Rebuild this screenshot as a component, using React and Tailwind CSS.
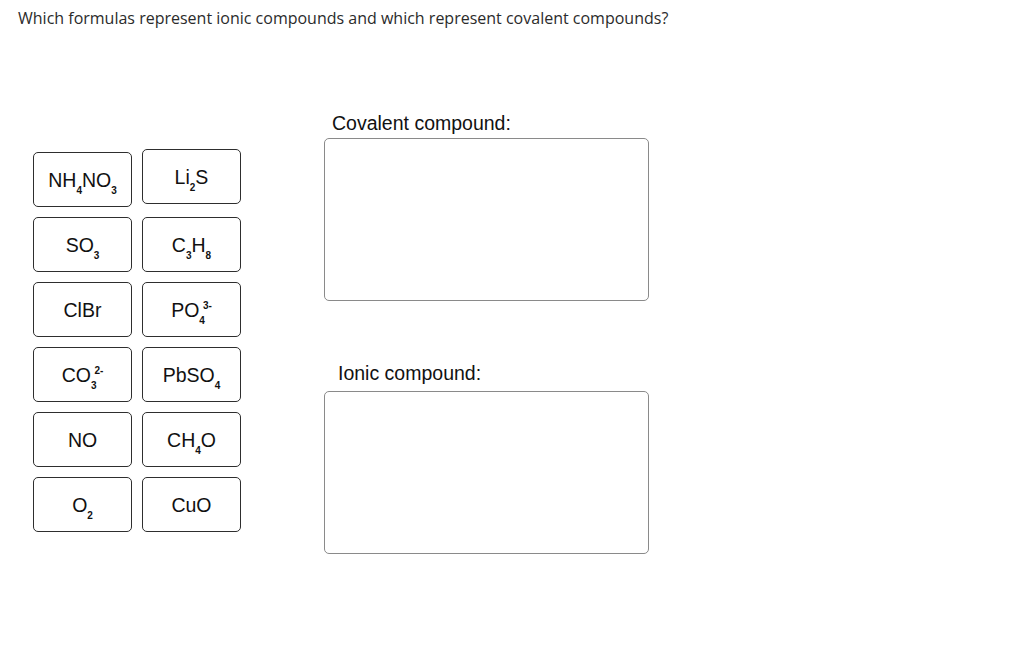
import React from 'react';

const Sub = ({ children }) => (
  <span className="relative top-[7px] text-[10px] font-bold leading-none">{children}</span>
);

const Sup = ({ children }) => (
  <span className="relative -top-[8px] -ml-[2px] text-[10px] font-bold leading-none">{children}</span>
);

const tiles = [
  { key: 'nh4no3', body: <>NH<Sub>4</Sub>NO<Sub>3</Sub></> },
  { key: 'li2s', body: <>Li<Sub>2</Sub>S</>, lifted: true },
  { key: 'so3', body: <>SO<Sub>3</Sub></> },
  { key: 'c3h8', body: <>C<Sub>3</Sub>H<Sub>8</Sub></> },
  { key: 'clbr', body: <>ClBr</> },
  { key: 'po4', body: <>PO<Sub>4</Sub><Sup>3-</Sup></> },
  { key: 'co3', body: <>CO<Sub>3</Sub><Sup>2-</Sup></> },
  { key: 'pbso4', body: <>PbSO<Sub>4</Sub></> },
  { key: 'no', body: <>NO</> },
  { key: 'ch4o', body: <>CH<Sub>4</Sub>O</> },
  { key: 'o2', body: <>O<Sub>2</Sub></> },
  { key: 'cuo', body: <>CuO</> },
];

const Tile = ({ body, lifted }) => (
  <div
    className={
      'h-[55px] flex items-center justify-center rounded-[5px] border border-[#2e2e2e] bg-white text-[19.5px] leading-none ' +
      (lifted ? '-mt-[3px] mb-[3px]' : '')
    }
  >
    <span className="pt-[2px]">{body}</span>
  </div>
);

export default function App() {
  return (
    <div className="w-[1024px] h-[648px] bg-white text-[#111] font-['Liberation_Sans',Arial,sans-serif]">
      {/* Question */}
      <h1 className="pl-[18px] pt-[8px] text-[16px] leading-[21px] text-[#2b2b2b] font-['Open_Sans',sans-serif]">
        Which formulas represent ionic compounds and which represent covalent compounds?
      </h1>

      <div className="flex items-start pt-[82px]">
        {/* Draggable formulas */}
        <div className="ml-[33px] mt-[41px] grid grid-cols-[99px_99px] gap-[10px]">
          {tiles.map((t) => (
            <Tile key={t.key} body={t.body} lifted={t.lifted} />
          ))}
        </div>

        {/* Drop zones */}
        <div className="ml-[83px] flex flex-col">
          <p className="pl-[8px] text-[19.5px] leading-[24px]">Covalent compound:</p>
          <div className="mt-[3px] w-[325px] h-[163px] rounded-[5px] border border-[#8a8a8a]" />
          <p className="mt-[60px] pl-[14px] text-[19.5px] leading-[24px]">Ionic compound:</p>
          <div className="mt-[6px] w-[325px] h-[163px] rounded-[5px] border border-[#8a8a8a]" />
        </div>
      </div>
    </div>
  );
}
